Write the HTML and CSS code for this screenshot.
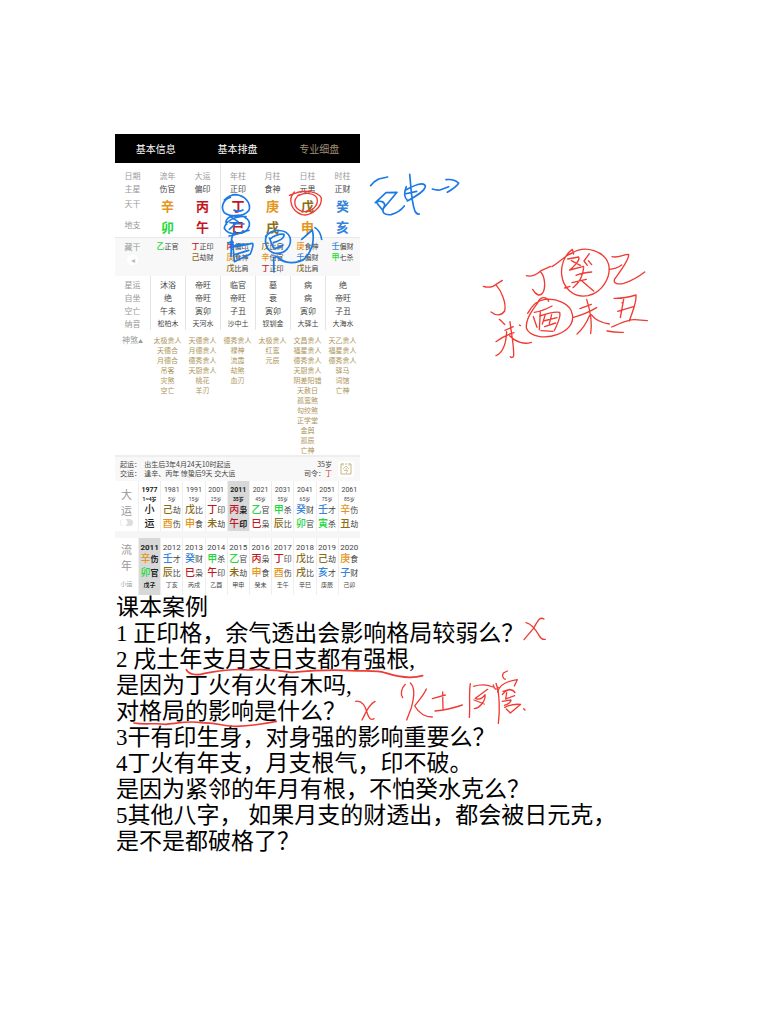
FILE: index.html
```
<!doctype html>
<html lang="zh-CN">
<head>
  <meta charset="utf-8">
  <meta name="viewport" content="width=device-width, initial-scale=1">
  <title>课本案例</title>
  <link rel="stylesheet" href="styles.css">
</head>
<body>
  <main class="page">
    <section class="chart">
      <nav class="tabs">
        <button type="button">基本信息</button>
        <button type="button">基本排盘</button>
        <button type="button" class="active">专业细盘</button>
      </nav>
      <table class="pillars">
        <tbody class="top">
          <tr class="names"><th>日期</th><td>流年</td><td>大运</td><td>年柱</td><td>月柱</td><td>日柱</td><td>时柱</td></tr>
          <tr><th>主星</th><td>伤官</td><td>偏印</td><td>正印</td><td>食神</td><td>元男</td><td>正财</td></tr>
          <tr class="big"><th>天干</th><td class="metal">辛</td><td class="fire">丙</td><td class="fire">丁</td><td class="metal">庚</td><td class="earth">戊</td><td class="water">癸</td></tr>
          <tr class="big"><th>地支</th><td class="wood">卯</td><td class="fire">午</td><td class="fire">巳</td><td class="earth">戌</td><td class="metal">申</td><td class="water">亥</td></tr>
        </tbody>
        <tbody class="hidden-stems">
          <tr>
            <th>藏干<button type="button" class="fold" aria-label="收起">◂</button></th>
            <td><b class="wood">乙</b>正官</td>
            <td><b class="fire">丁</b>正印<br><b class="earth">己</b>劫财</td>
            <td><b class="fire">丙</b>偏印<br><b class="metal">庚</b>食神<br><b class="earth">戊</b>比肩</td>
            <td><b class="earth">戊</b>比肩<br><b class="metal">辛</b>伤官<br><b class="fire">丁</b>正印</td>
            <td><b class="metal">庚</b>食神<br><b class="water">壬</b>偏财<br><b class="earth">戊</b>比肩</td>
            <td><b class="water">壬</b>偏财<br><b class="wood">甲</b>七杀</td>
          </tr>
        </tbody>
        <tbody class="stages">
          <tr><th>星运</th><td>沐浴</td><td>帝旺</td><td>临官</td><td>墓</td><td>病</td><td>绝</td></tr>
          <tr><th>自坐</th><td>绝</td><td>帝旺</td><td>帝旺</td><td>衰</td><td>病</td><td>帝旺</td></tr>
          <tr><th>空亡</th><td>午未</td><td>寅卯</td><td>子丑</td><td>寅卯</td><td>寅卯</td><td>子丑</td></tr>
          <tr class="nayin"><th>纳音</th><td>松柏木</td><td>天河水</td><td>沙中土</td><td>钗钏金</td><td>大驿土</td><td>大海水</td></tr>
        </tbody>
        <tbody class="stars">
          <tr>
            <th>神煞<span class="caret">▲</span></th>
            <td>太极贵人<br>天德合<br>月德合<br>吊客<br>灾煞<br>空亡</td>
            <td>天德贵人<br>月德贵人<br>德秀贵人<br>天厨贵人<br>桃花<br>羊刃</td>
            <td>德秀贵人<br>禄神<br>流霞<br>劫煞<br>血刃</td>
            <td>太极贵人<br>红鸾<br>元辰</td>
            <td>文昌贵人<br>福星贵人<br>德秀贵人<br>天厨贵人<br>阴差阳错<br>天赦日<br>孤鸾煞<br>勾绞煞<br>正学堂<br>金舆<br>孤辰<br>亡神</td>
            <td>天乙贵人<br>福星贵人<br>德秀贵人<br>驿马<br>词馆<br>亡神</td>
          </tr>
        </tbody>
      </table>

      <div class="start">
        <p>起运：&nbsp; 出生后3年4月24天10时起运<br>交运：&nbsp; 逢辛、丙年 惊蛰后9天 交大运</p>
        <p class="age">35岁<br>司令：<span class="fire">丁</span></p>
        <button type="button" class="today" aria-label="今">
          <svg viewBox="0 0 16 16" width="16" height="16" fill="none" stroke="#c5b482">
            <path d="M5 3H3v10h10V3h-2M5 2v2.500M11 2v2.500M7 3h2"/>
            <path d="M5 8l3-3 3 3M7 8h2M6 9.500h4L8 12" stroke-width=".8"/>
          </svg>
        </button>
      </div>

      <table class="luck">
        <tr class="years">
          <th rowspan="4">大<br>运<input type="checkbox" class="switch" aria-label="大运"></th>
          <td class="first">1977</td><td>1981</td><td>1991</td><td>2001</td><td class="on">2011</td><td>2021</td><td>2031</td><td>2041</td><td>2051</td><td>2061</td>
        </tr>
        <tr class="ages"><td class="first">1~4岁</td><td>5岁</td><td>15岁</td><td>25岁</td><td class="on">35岁</td><td>45岁</td><td>55岁</td><td>65岁</td><td>75岁</td><td>85岁</td></tr>
        <tr class="pair"><td class="first"><b>小</b></td><td><b class="earth">己</b>劫</td><td><b class="earth">戊</b>比</td><td><b class="fire">丁</b>印</td><td class="on"><b class="fire">丙</b>枭</td><td><b class="wood">乙</b>官</td><td><b class="wood">甲</b>杀</td><td><b class="water">癸</b>财</td><td><b class="water">壬</b>才</td><td><b class="metal">辛</b>伤</td></tr>
        <tr class="pair"><td class="first"><b>运</b></td><td><b class="metal">酉</b>伤</td><td><b class="metal">申</b>食</td><td><b class="earth">未</b>劫</td><td class="on"><b class="fire">午</b>印</td><td><b class="fire">巳</b>枭</td><td><b class="earth">辰</b>比</td><td><b class="wood">卯</b>官</td><td><b class="wood">寅</b>杀</td><td><b class="earth">丑</b>劫</td></tr>
      </table>

      <table class="luck annual">
        <tr class="years">
          <th rowspan="4">流<br>年<br><small>小运</small></th>
          <td class="on">2011</td><td>2012</td><td>2013</td><td>2014</td><td>2015</td><td>2016</td><td>2017</td><td>2018</td><td>2019</td><td>2020</td>
        </tr>
        <tr class="pair"><td class="on"><b class="metal">辛</b>伤</td><td><b class="water">壬</b>才</td><td><b class="water">癸</b>财</td><td><b class="wood">甲</b>杀</td><td><b class="wood">乙</b>官</td><td><b class="fire">丙</b>枭</td><td><b class="fire">丁</b>印</td><td><b class="earth">戊</b>比</td><td><b class="earth">己</b>劫</td><td><b class="metal">庚</b>食</td></tr>
        <tr class="pair"><td class="on"><b class="wood">卯</b>官</td><td><b class="earth">辰</b>比</td><td><b class="fire">巳</b>枭</td><td><b class="fire">午</b>印</td><td><b class="earth">未</b>劫</td><td><b class="metal">申</b>食</td><td><b class="metal">酉</b>伤</td><td><b class="earth">戌</b>比</td><td><b class="water">亥</b>才</td><td><b class="water">子</b>财</td></tr>
        <tr class="minor"><td class="on">戊子</td><td>丁亥</td><td>丙戌</td><td>乙酉</td><td>甲申</td><td>癸未</td><td>壬午</td><td>辛巳</td><td>庚辰</td><td>己卯</td></tr>
      </table>
    </section>

    <section class="notes">
      <p>课本案例</p>
      <p>1 正印格，余气透出会影响格局较弱么？</p>
      <p>2 戌土年支月支日支都有强根,</p>
      <p>是因为丁火有火有木吗,</p>
      <p>对格局的影响是什么？</p>
      <p>3干有印生身，对身强的影响重要么？</p>
      <p>4丁火有年支，月支根气，印不破。</p>
      <p>是因为紧邻的年月有根，不怕癸水克么？</p>
      <p>5其他八字， 如果月支的财透出，都会被日元克，</p>
      <p>是不是都破格了？</p>
    </section>

    <!-- pen marks over the chart and the notes -->
    <svg class="ink" viewBox="0 0 2304 3072" aria-hidden="true">
      <g class="blue">
        <g transform="translate(1090 495)">
          <path d="M22 62L32 51L46 42L73 36"/>
          <path d="M36 113L68 83L101 82L57 134L39 112C50 105 65 110 64 122C54 140 58 151 83 149C99 145 112 137 123 123"/>
          <path d="M129 65C122 82 120 96 133 107M126 76C151 62 181 48 186 63C187 77 157 94 132 108M124 87L160 79M139 28C143 60 143 105 154 136Q160 150 168 147"/>
          <path d="M207 72Q218 76 230 75L256 65M248 44C266 42 280 48 286 55Q278 67 252 82"/>
        </g>
        <g transform="translate(630 540)">
          <path d="M61 52C41 57 30 82 43 98C59 112 101 112 117 91C124 68 104 47 78 44C67 44 54 49 43 60M72 90Q86 97 99 90"/>
          <path d="M108 110C76 105 45 125 43 145C55 168 106 166 115 144C126 124 108 107 82 106C61 106 42 117 50 133"/>
          <path d="M62 110L84 125L58 148M60 128L102 132M57 168C77 166 96 154 117 151"/>
          <path d="M76 155C60 167 65 197 63 229M67 183L54 190M61 203Q80 192 102 193M68 185L73 245L121 222C128 205 131 191 127 190L70 201M74 224L116 211"/>
          <path d="M174 160C158 183 169 215 195 220C226 223 247 197 240 172C230 147 190 143 167 169"/>
          <path d="M180 177Q202 160 222 163C224 174 207 184 190 188M178 174L190 203Q204 208 219 195"/>
          <path d="M192 276L191 236Q198 225 205 234C224 250 257 254 283 237C306 213 314 181 307 150L275 178M315 143Q331 153 335 178"/>
        </g>
      </g>
      <g class="red">
        <g transform="translate(630 540)">
          <path d="M253 36C232 58 244 93 276 104C305 110 337 80 334 54C325 34 279 27 250 42L238 46M267 44C247 60 251 85 276 94C303 99 327 77 321 55C314 39 286 36 267 46"/>
        </g>
        <g transform="translate(1410 705)">
          <path d="M40 154Q54 159 69 154L97 136M79 151C92 165 110 202 104 228Q88 250 63 231"/>
          <path d="M169 122Q188 128 213 107L242 94M212 111C225 125 228 158 218 174Q204 190 188 163"/>
          <path d="M246 95C270 80 286 61 307 54C345 29 405 49 416 89C424 126 397 172 354 182C309 190 279 158 275 119C272 91 283 60 307 43L311 57"/>
          <path d="M293 72L326 66C332 76 308 98 299 105M304 77L331 91M358 56L342 78L352 91M355 77L365 89M299 105L341 94M318 121Q337 113 365 111M341 98C338 129 324 147 309 158M306 143L349 133M335 137L371 168M284 159L300 154"/>
          <path d="M418 103Q438 102 455 90M426 65C445 70 462 57 476 58C478 75 452 107 434 132C428 145 443 149 461 145C484 138 505 126 524 111"/>
          <path d="M88 253Q101 265 104 269M105 286L130 275M78 320Q105 300 132 293M78 362C97 354 108 327 110 290M120 260C124 296 132 330 131 362Q127 371 121 365M119 302C138 322 163 329 184 322M148 270L151 272"/>
          <path d="M236 199C228 182 210 186 204 202C188 224 167 251 169 279C179 306 226 312 263 298C294 287 313 263 307 238C302 205 259 190 225 193C202 195 185 213 173 235"/>
          <path d="M193 232Q218 228 246 213M190 245L201 277M211 230L208 284M209 243Q249 229 269 232C274 246 262 267 253 287M226 239L217 267M245 239L238 266M220 258L261 248M224 275L257 264M213 287L249 289"/>
          <path d="M330 221L364 208M310 247Q346 238 380 218M350 193C360 224 367 264 362 296M359 241Q344 278 321 297M364 239Q381 262 418 267"/>
          <path d="M432 190Q461 191 498 180C500 206 485 235 478 258M461 193L451 248M443 229L493 214M425 276C451 266 472 253 494 254L532 257M411 288Q437 293 460 292M456 203L458 205"/>
        </g>
        <g class="underline" transform="translate(330 1770)">
          <path d="M229 239C235 254 261 257 284 250C323 244 362 234 414 240C459 237 500 239 545 247C590 243 660 237 721 242C774 244 804 240 824 248C870 263 910 265 938 257"/>
          <path d="M72 399C105 405 135 398 167 403C207 399 241 391 278 399C320 397 344 410 380 409C421 408 454 403 499 394"/>
        </g>
        <g transform="translate(330 1770)">
          <path d="M737 334C757 330 766 348 772 370Q779 394 792 386M795 334C773 346 766 372 756 390"/>
        </g>
        <g transform="translate(1050 1800)">
          <path d="M528 68C547 72 561 95 569 109Q575 120 586 118M582 57C567 48 561 68 550 86L522 119"/>
          <path d="M166 253C153 265 151 284 158 293M181 249C197 263 191 298 184 323L170 360M229 267C219 290 203 304 194 318C206 338 225 351 247 351"/>
          <path d="M247 296L286 285M278 276L279 329M255 333Q294 330 337 315M361 251C356 280 361 319 358 352M371 259Q401 249 429 261M413 268L376 295Q393 303 405 284C408 304 387 325 373 326M372 300L403 312"/>
          <path d="M438 250C449 279 450 333 445 370M430 255Q435 276 445 262"/>
          <path d="M472 213L460 219Q454 233 466 238M443 276C449 253 471 243 502 239L493 258M459 274L479 268M457 284C467 269 485 263 495 278M470 278L467 297L494 287M457 304L483 300Q483 309 463 316M464 322Q486 311 510 313M469 327L481 339L512 313M521 326L525 330"/>
        </g>
      </g>
    </svg>
  </main>
</body>
</html>
```
FILE: styles.css
```
body {
  margin: 0;
  background: #fff;
  color: #000;
  font-family: "Noto Sans CJK SC", sans-serif;
}

p {
  margin: 0;
}

button {
  padding: 0;
  border: 0;
  background: none;
  font: inherit;
  color: inherit;
}

.page {
  position: relative;
  padding: 134px 115px 160px;
}

.chart {
  max-width: 245px;
  color: #444;
  font-size: 8px;
}

.tabs {
  display: flex;
  height: 29px;
  background: #000;
}

.tabs button {
  flex: 1;
  color: #fff;
  font-size: 10px;
}

.tabs .active {
  color: #a08f75;
}

table {
  width: 100%;
  table-layout: fixed;
  border-spacing: 0;
  text-align: center;
}

th,
td {
  padding: 0;
  white-space: nowrap;
  line-height: 13px;
}

th {
  color: #999;
  font-weight: normal;
}

/* keeps the larger glyphs from stretching the rows */
td b {
  line-height: 0;
}

.wood { color: #21d83d; }
.fire { color: #c4161c; }
.earth { color: #8a6c14; }
.metal { color: #e5951b; }
.water { color: #3583dd; }

/* four pillars */
.names td,
.names th {
  height: 19px;
  vertical-align: bottom;
  color: #999;
}

.top td:nth-child(4) {
  border-left: 1px solid #e4e4e4;
}

.big th {
  padding-bottom: 4px;
}

.big td {
  height: 21px;
  font-size: 13px;
  font-weight: bold;
}

.hidden-stems th,
.hidden-stems td {
  height: 34px;
  padding: 3px 0 1px;
  vertical-align: top;
  line-height: 11px;
  font-size: 7px;
  background: #f8f8f8;
  border-top: 1px solid #e8e8e8;
}

.hidden-stems th {
  font-size: 8px;
}

.hidden-stems b {
  font-size: 8px;
  font-weight: 500;
}

.fold {
  display: block;
  width: 11px;
  height: 11px;
  margin: 2px auto 0;
  border-radius: 50%;
  background: #fff;
  color: #bbb;
  font-size: 8px;
  line-height: 11px;
}

.stages tr:first-child > * {
  padding-top: 2px;
}

.stages td {
  border-left: 1px solid #e4e4e4;
}

.stages .nayin td {
  font-size: 7px;
}

.stars th,
.stars td {
  padding-top: 5px;
  vertical-align: top;
  line-height: 10px;
}

.stars td {
  font-size: 7px;
  color: #ac945a;
}

.caret {
  font-size: 5px;
  line-height: 0;
}

/* start of the luck cycle */
.start {
  display: flex;
  align-items: center;
  gap: 6px;
  padding: 3px 6px 3px 5px;
  border-top: 2px solid #eee;
  background: #f8f8f8;
  font-size: 7px;
  line-height: 9px;
}

.age {
  margin-left: auto;
  text-align: right;
}

.today {
  display: flex;
  border-radius: 2px;
  background: #fff;
}

/* ten-year and annual luck */
.luck th {
  width: 23px;
  font-size: 11px;
  line-height: 16px;
}

.luck td {
  border-left: 1px solid #eee;
}

.luck .on {
  background: #d8d8d8;
  color: #222;
  font-weight: bold;
}

.luck .first {
  color: #222;
  font-weight: bold;
}

.years td {
  height: 14px;
  vertical-align: bottom;
  font-family: Roboto, sans-serif;
  font-size: 7px;
  line-height: 9px;
}

.ages td {
  font-family: Roboto, "Noto Sans CJK SC", sans-serif;
  font-size: 5px;
  line-height: 8px;
}

.pair td {
  height: 14px;
  font-size: 8px;
  line-height: 14px;
}

.pair b {
  font-size: 10px;
  font-weight: 500;
}

.switch {
  appearance: none;
  display: block;
  width: 13px;
  height: 7px;
  margin: 1px auto 0;
  border-radius: 4px;
  background: radial-gradient(circle at 4px 50%, #fff 3px, #ddd 4px);
}

.annual {
  border-top: 7px solid #f6f6f6;
}

.annual .years td {
  font-size: 8px;
}

.annual .minor td {
  height: 15px;
  padding-bottom: 5px;
  font-size: 6px;
  line-height: 10px;
  box-sizing: border-box;
}

.annual small {
  font-size: 6px;
}

/* questions under the chart */
.notes {
  padding-left: 1px;
  font-family: "Liberation Serif", "Noto Sans CJK SC", sans-serif;
  font-size: 23px;
  line-height: 26px;
}

.ink {
  position: absolute;
  top: 0;
  left: 0;
  width: 768px;
  height: 1024px;
  pointer-events: none;
  fill: none;
  stroke-width: 4;
  stroke-linecap: round;
  stroke-linejoin: round;
}

.blue {
  stroke: #1b7ae6;
  stroke-width: 5;
}

.red {
  stroke: #ef3b33;
}

.underline {
  stroke-width: 5;
}
```
